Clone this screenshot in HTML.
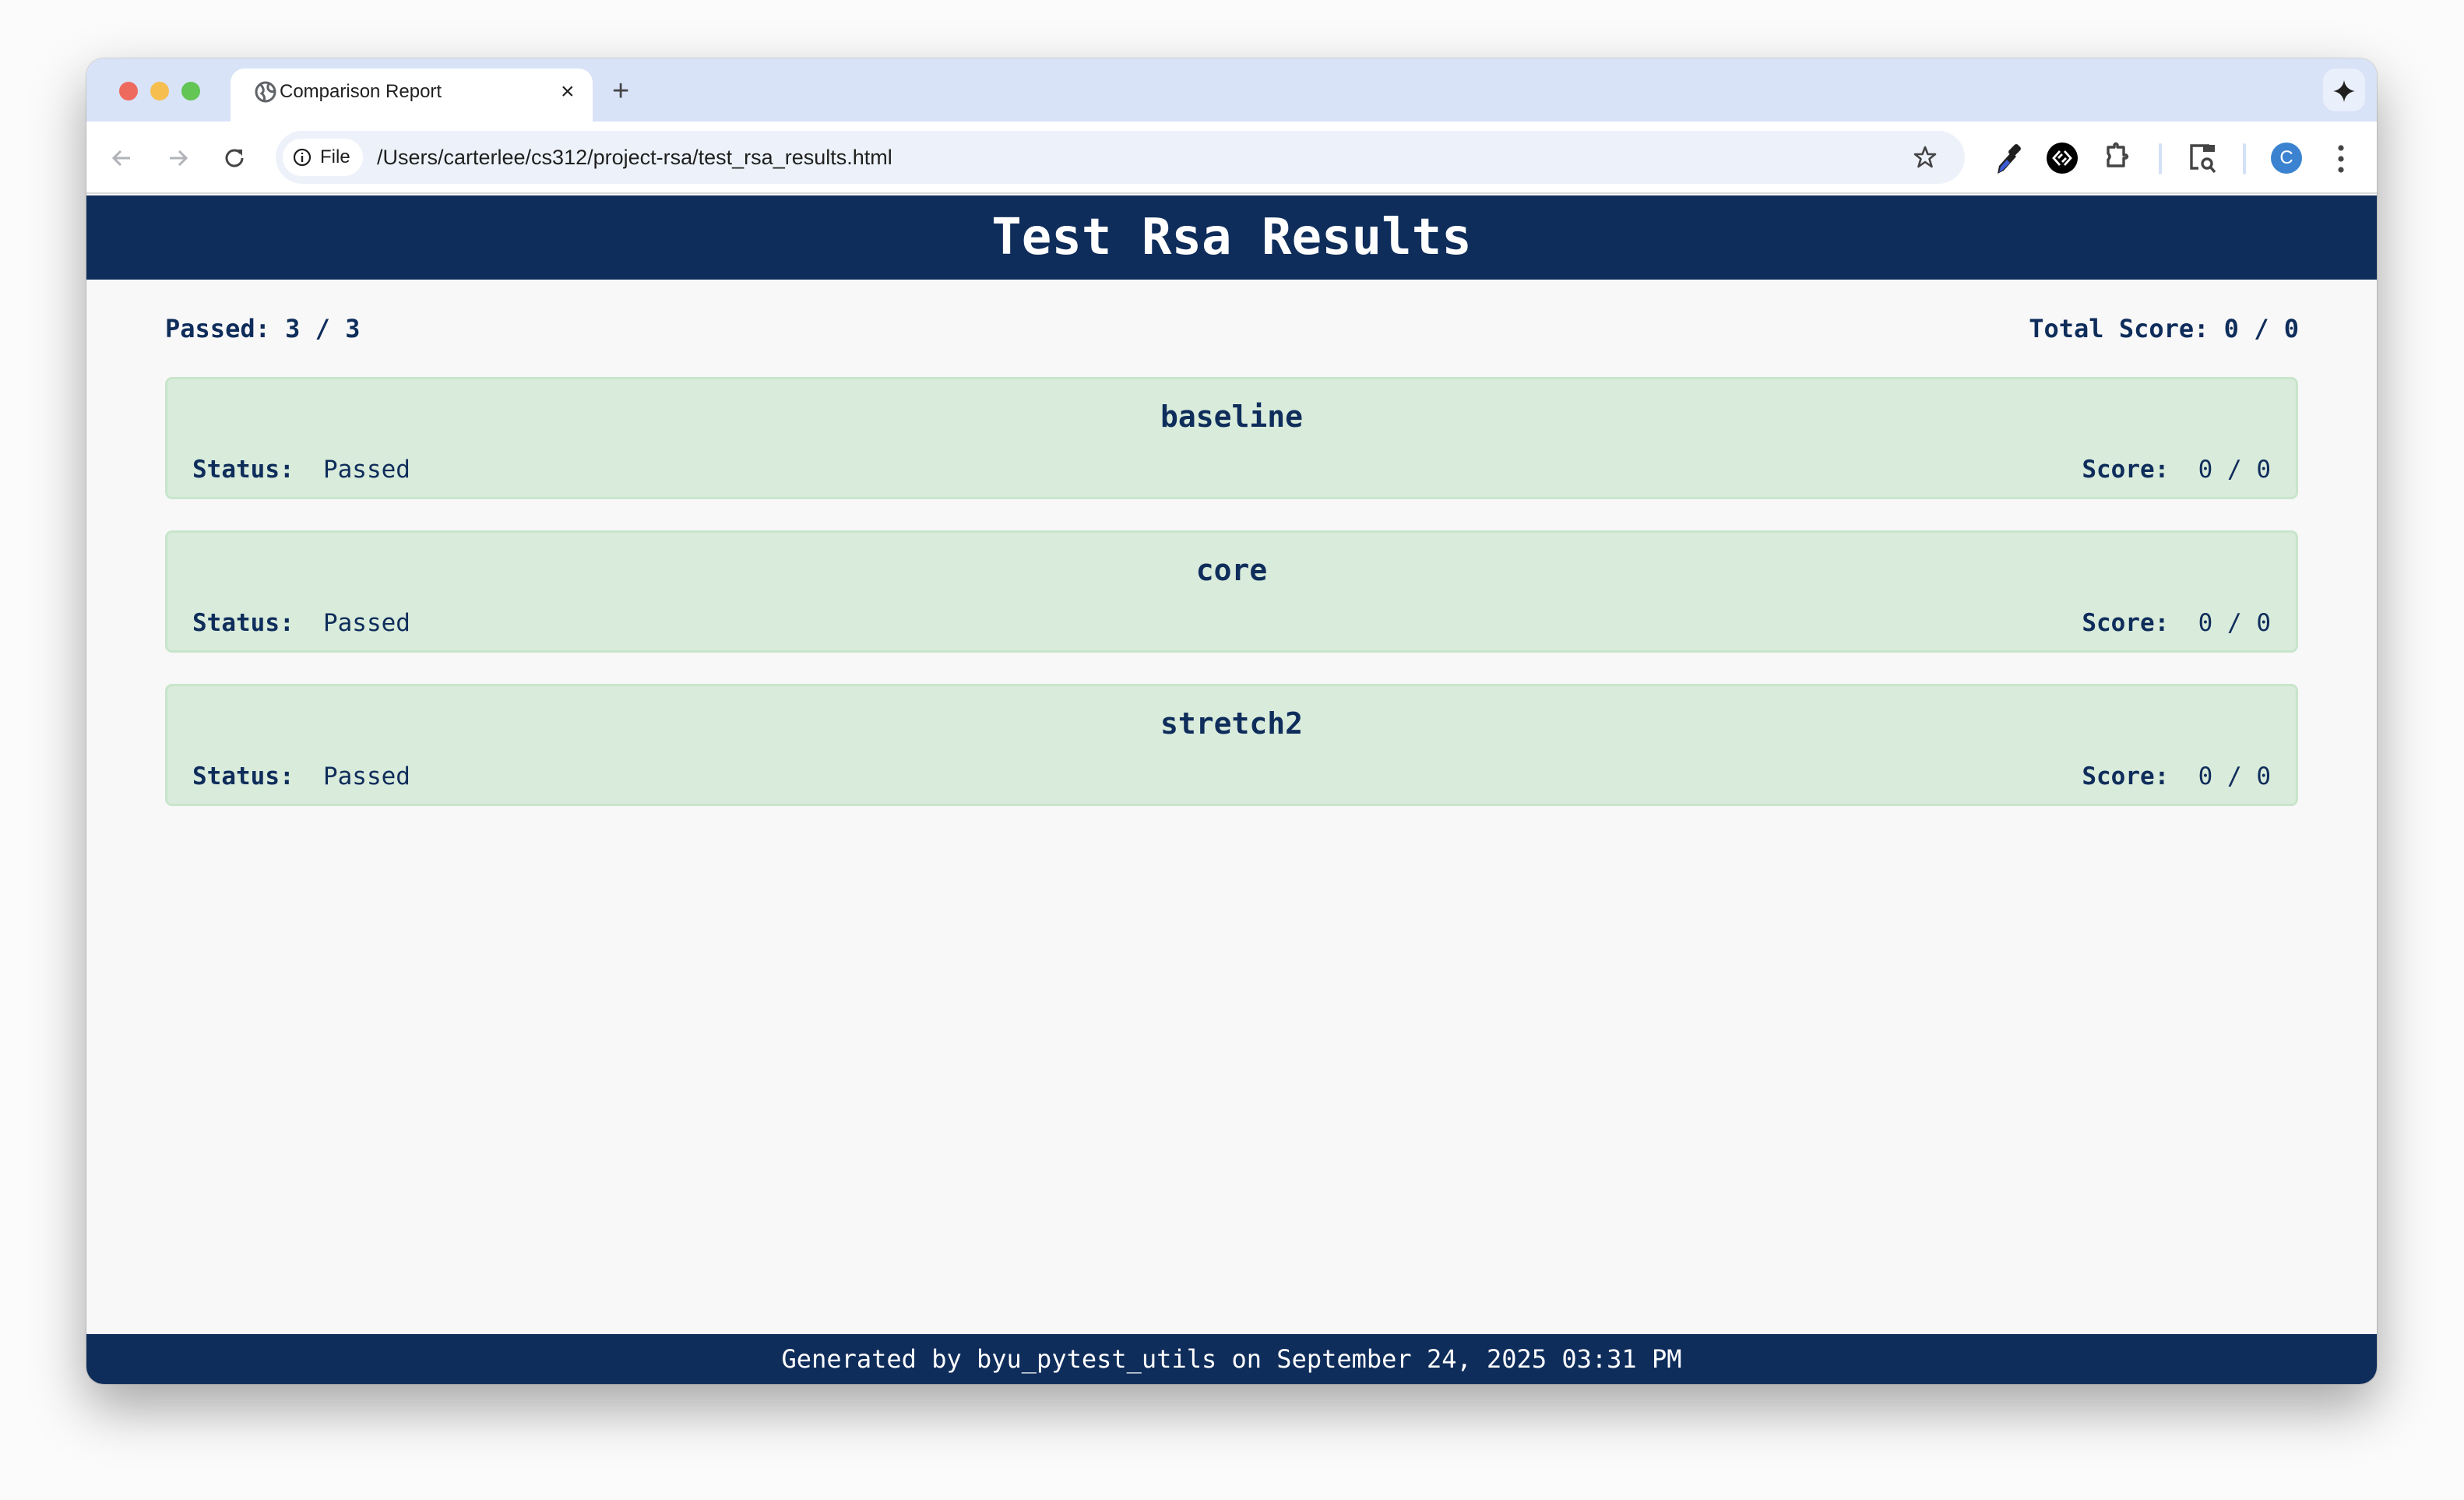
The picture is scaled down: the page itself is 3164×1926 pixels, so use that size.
<!DOCTYPE html>
<html><head><meta charset="utf-8"><style>
*{margin:0;padding:0;box-sizing:border-box}
html,body{width:3164px;height:1926px;background:#fbfbfb;overflow:hidden;font-family:"Liberation Sans",sans-serif}
.win{position:absolute;left:111px;top:75px;width:2941px;height:1702px;border-radius:22px;overflow:hidden;box-shadow:0 30px 70px rgba(0,0,0,.35),0 0 0 1px rgba(0,0,0,.12);background:#f8f8f8}
.tabs{position:absolute;left:0;top:0;width:100%;height:81px;background:#d8e3f8}
.dot{position:absolute;top:30px;width:24px;height:24px;border-radius:50%}
.tab{position:absolute;left:185px;top:13px;width:465px;height:70px;background:#fff;border-radius:18px 18px 0 0}
.tb{position:absolute;left:0;top:81px;width:100%;height:93px;background:#fff;border-bottom:2px solid #dadce0}
.omni{position:absolute;left:243px;top:12px;width:2169px;height:68px;border-radius:34px;background:#edf2fa}
.chip{position:absolute;left:9px;top:10px;width:103px;height:48px;border-radius:24px;background:#fff;font-size:24px;color:#1f1f1f;line-height:48px;padding-left:48px}
.url{position:absolute;left:130px;top:0;line-height:68px;font-size:27px;color:#1f1f1f}
.hdr{position:absolute;left:0;top:176px;width:100%;height:108px;background:#0f2d5b;color:#fff;text-align:center;font:bold 64px/108px "DejaVu Sans Mono",monospace}
.mono{font-family:"DejaVu Sans Mono",monospace;color:#0f2d5b}
.sum{position:absolute;top:328px;font-size:32px;font-weight:bold}
.card{position:absolute;left:101px;width:2739px;height:157px;background:#d9ebdb;border:3px solid #c8e5cb;border-radius:9px}
.card .t{position:absolute;left:0;width:100%;top:26px;text-align:center;font-size:38px;font-weight:bold}
.card .s{position:absolute;left:32px;top:98px;font-size:31px}
.card .r{position:absolute;right:32px;top:98px;font-size:31px}
.foot{position:absolute;left:0;top:1638px;width:100%;height:64px;background:#0f2d5b;color:#fff;text-align:center;font:32px/64px "DejaVu Sans Mono",monospace}
</style></head><body>
<div class="win">
 <div class="tabs">
  <div class="dot" style="left:42px;background:#ee6a5f"></div>
  <div class="dot" style="left:82px;background:#f5be4f"></div>
  <div class="dot" style="left:122px;background:#62c554"></div>
  <div class="tab">
   <svg style="position:absolute;left:31px;top:16px" width="28" height="28" viewBox="0 0 28 28"><circle cx="14" cy="14" r="12" fill="none" stroke="#5f6368" stroke-width="3"/><path d="M8 5 Q14 12 9 16 Q14 20 12 25 M18 4 Q15 10 20 13 Q24 15 25 12" fill="none" stroke="#5f6368" stroke-width="3"/></svg>
   <div style="position:absolute;left:63px;top:0;line-height:60px;font-size:24px;color:#1f1f1f">Comparison Report</div>
   <div style="position:absolute;left:424px;top:0;line-height:60px;font-size:30px;color:#1f1f1f">×</div>
  </div>
  <div style="position:absolute;left:675px;top:0;line-height:84px;font-size:38px;color:#444">+</div>
  <div style="position:absolute;left:2872px;top:13px;width:54px;height:55px;border-radius:16px;background:#e9effb"></div>
  <svg style="position:absolute;left:2885px;top:28px" width="28" height="28" viewBox="0 0 28 28"><path d="M14 0 Q16 12 28 14 Q16 16 14 28 Q12 16 0 14 Q12 12 14 0Z" fill="#1f1f1f"/></svg>
 </div>
 <div class="tb">
  <svg style="position:absolute;left:30px;top:32px" width="30" height="30" viewBox="0 0 30 30"><path d="M26 15H5M14 6L5 15L14 24" fill="none" stroke="#b0b3b8" stroke-width="3"/></svg>
  <svg style="position:absolute;left:103px;top:32px" width="30" height="30" viewBox="0 0 30 30"><path d="M4 15H25M16 6L25 15L16 24" fill="none" stroke="#b0b3b8" stroke-width="3"/></svg>
  <svg style="position:absolute;left:175px;top:32px" width="30" height="30" viewBox="0 0 30 30"><path d="M23 9A10 10 0 1 0 25 15" fill="none" stroke="#444" stroke-width="3"/><path d="M17 4L25 4L25 12Z" fill="#444"/></svg>
  <div class="omni">
   <div class="chip"><svg style="position:absolute;left:13px;top:12px" width="24" height="24" viewBox="0 0 24 24"><circle cx="12" cy="12" r="10" fill="none" stroke="#1f1f1f" stroke-width="2.2"/><path d="M12 10V18M12 6V8" stroke="#1f1f1f" stroke-width="2.4"/></svg>File</div>
   <div class="url">/Users/carterlee/cs312/project-rsa/test_rsa_results.html</div>
   <svg style="position:absolute;left:2102px;top:18px" width="32" height="32" viewBox="0 0 32 32"><path d="M16 3L19.5 12H29L21.5 18L24.5 28L16 22L7.5 28L10.5 18L3 12H12.5Z" fill="none" stroke="#444" stroke-width="2.6" stroke-linejoin="round"/></svg>
  </div>
  <svg style="position:absolute;left:2450px;top:25px" width="34" height="44" viewBox="0 0 34 44"><path d="M4 42L6 32L22 14L28 20L12 38Z" fill="#1f1f1f"/><path d="M6 40L8 33L16 24L20 28L11 37Z" fill="#3b5bd6"/><rect x="21" y="4" width="10" height="16" rx="3" transform="rotate(45 26 12)" fill="#1f1f1f"/></svg>
  <svg style="position:absolute;left:2516px;top:26px" width="42" height="42" viewBox="0 0 42 42"><circle cx="21" cy="21" r="20" fill="#000"/><path d="M18 12L10 21L18 30M24 12L32 21L24 30M16 21L21 16M26 21L21 26" fill="none" stroke="#fff" stroke-width="2.8"/></svg>
  <svg style="position:absolute;left:2592px;top:25px" width="34" height="44" viewBox="0 0 34 44"><path d="M4 8H12V5Q14 2 16 5V8H24V18H27Q30 20 27 22H24V32H4V24Q8 20 4 16Z" fill="none" stroke="#444" stroke-width="3.4" stroke-linejoin="round"/></svg>
  <div style="position:absolute;left:2661px;top:28px;width:4px;height:40px;background:#d3e1f7;border-radius:2px"></div>
  <svg style="position:absolute;left:2700px;top:28px" width="38" height="40" viewBox="0 0 38 40"><path d="M12 32H3V3H26" fill="none" stroke="#444" stroke-width="3.4"/><rect x="18" y="2" width="15" height="9" fill="#444"/><circle cx="23" cy="26" r="6" fill="none" stroke="#444" stroke-width="3.4"/><path d="M27 30L33 37" stroke="#444" stroke-width="3.4"/></svg>
  <div style="position:absolute;left:2769px;top:28px;width:4px;height:40px;background:#d3e1f7;border-radius:2px"></div>
  <div style="position:absolute;left:2805px;top:27px;width:40px;height:40px;border-radius:50%;background:#3b83d0;color:#fff;font-size:24px;text-align:center;line-height:40px">C</div>
  <svg style="position:absolute;left:2889px;top:28px" width="12" height="40" viewBox="0 0 12 40"><circle cx="6" cy="6" r="3.6" fill="#444"/><circle cx="6" cy="20" r="3.6" fill="#444"/><circle cx="6" cy="34" r="3.6" fill="#444"/></svg>
 </div>
 <div class="hdr">Test Rsa Results</div>
 <div class="sum mono" style="left:101px">Passed: 3 / 3</div>
 <div class="sum mono" style="right:100px">Total Score: 0 / 0</div>
 <div class="card mono" style="top:409px"><div class="t">baseline</div><div class="s"><b>Status:</b>&nbsp; Passed</div><div class="r"><b>Score:</b>&nbsp; 0 / 0</div></div>
 <div class="card mono" style="top:606px"><div class="t">core</div><div class="s"><b>Status:</b>&nbsp; Passed</div><div class="r"><b>Score:</b>&nbsp; 0 / 0</div></div>
 <div class="card mono" style="top:803px"><div class="t">stretch2</div><div class="s"><b>Status:</b>&nbsp; Passed</div><div class="r"><b>Score:</b>&nbsp; 0 / 0</div></div>
 <div class="foot">Generated by byu_pytest_utils on September 24, 2025 03:31 PM</div>
</div>
</body></html>
